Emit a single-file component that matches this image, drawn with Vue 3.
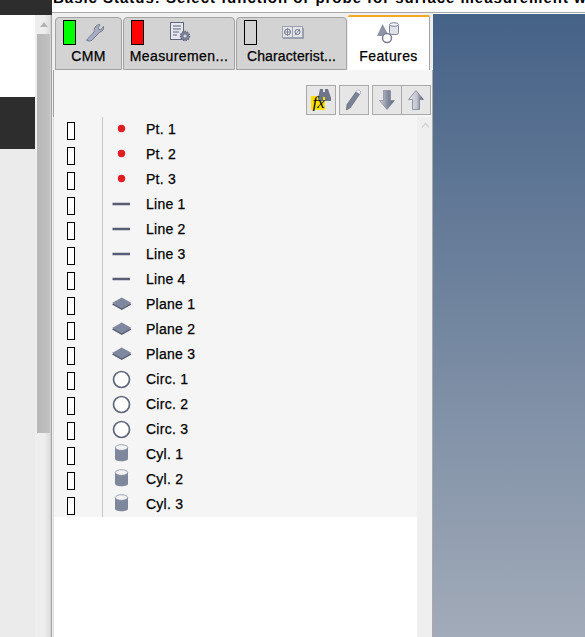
<script setup>
const groups = [
  { kind: 'pt', names: ['Pt. 1', 'Pt. 2', 'Pt. 3'] },
  { kind: 'line', names: ['Line 1', 'Line 2', 'Line 3', 'Line 4'] },
  { kind: 'plane', names: ['Plane 1', 'Plane 2', 'Plane 3'] },
  { kind: 'circ', names: ['Circ. 1', 'Circ. 2', 'Circ. 3'] },
  { kind: 'cyl', names: ['Cyl. 1', 'Cyl. 2', 'Cyl. 3'] },
]
const rows = groups.flatMap(g => g.names.map(name => ({ name, kind: g.kind })))
</script>

<template>
  <div class="page">
    <aside class="side">
      <div class="top-dark"></div>
      <div class="side-body">
        <div class="side-main">
          <div class="white"></div>
          <div class="dark"></div>
          <div class="grey"></div>
        </div>
        <div class="sbar">
          <div class="sbar-btn">
            <svg width="8" height="5" viewBox="0 0 8 5"><path d="M0 5 4 0 8 5Z" fill="#b4b4b4"/></svg>
          </div>
          <div class="sbar-thumb"></div>
        </div>
      </div>
    </aside>

    <main class="center">
      <div class="title-strip"><div class="title">Basic Status: Select function or probe for surface measurement with</div></div>

      <div class="tabs">
        <div class="tab t1">
          <div class="tab-top">
            <span class="lamp green"></span>
            <svg class="ticon" width="20" height="20" viewBox="0 0 20 20">
              <path d="M18.500 3.500c.6 3-1.200 5.500-4 5.700L7 17.200c-1.500 1.300-3.800.4-5.300.4-.3 0-.3-.4 0-.6l7.600-8.200C8.600 5.500 10.800 1.700 14.700 1.500l.5.400-2 2.400.4 2.200 2.100.5 2.300-3.100Z" fill="#a9afc2" stroke="#737a90" stroke-width="1"/>
            </svg>
          </div>
          <div class="tab-label">CMM</div>
        </div>
        <div class="tab t2">
          <div class="tab-top">
            <span class="lamp red"></span>
            <svg class="ticon i2" width="21" height="20" viewBox="0 0 21 20">
              <rect x="0.500" y="0.500" width="13" height="17" fill="#e6e8ee" stroke="#5f6880"/>
              <path d="M3 4h8M3 7h8M3 10h6M3 13h4" stroke="#596278" stroke-width="1.200"/>
              <circle cx="15" cy="14" r="4.500" fill="#7b8296" stroke="#666d82" stroke-width="1.500" stroke-dasharray="1.500 1"/>
              <circle cx="15" cy="14" r="1.500" fill="#d5d7dd"/>
            </svg>
          </div>
          <div class="tab-label">Measuremen...</div>
        </div>
        <div class="tab t3">
          <div class="tab-top">
            <span class="lamp empty"></span>
            <svg class="ticon i3" width="22" height="13" viewBox="0 0 22 13">
              <rect x="1" y="2" width="21" height="11" fill="#9a9fae"/>
              <rect x="0.500" y="0.500" width="20" height="11" fill="#e3e5ea" stroke="#9ca1af"/>
              <path d="M10.500 .5v11" stroke="#9ca1af"/>
              <circle cx="5.500" cy="6" r="3" fill="none" stroke="#6f7689"/>
              <path d="M2 6h7M5.500 2.500v7" stroke="#6f7689" stroke-width=".8"/>
              <circle cx="15.500" cy="6" r="2.500" fill="none" stroke="#6f7689"/>
              <path d="M13 9 18 3" stroke="#6f7689" stroke-width=".8"/>
            </svg>
          </div>
          <div class="tab-label narrow">Characterist...</div>
        </div>
        <div class="tab t4">
          <svg class="ficon" width="24" height="24" viewBox="0 0 24 24">
            <path d="M5.500 3 12 15H0Z" fill="#8e94a8"/>
            <rect x="12.500" y="2.500" width="9" height="11" rx="2" fill="#dfe1e7" stroke="#7d849a"/>
            <ellipse cx="17" cy="3.500" rx="4.500" ry="1.800" fill="#f4f5f7" stroke="#7d849a"/>
            <circle cx="10" cy="17" r="4.500" fill="#fff" stroke="#777e94" stroke-width="1.500"/>
          </svg>
          <div class="tab-label f">Features</div>
        </div>
      </div>

      <div class="panel">
        <div class="toolbar">
          <button class="tbtn">
            <svg width="22" height="22" viewBox="0 0 22 22">
              <rect x="1" y="7" width="14" height="14" fill="#fde000"/>
              <path d="M10 0h3v3h2V0h3l3 9v3h-6V8h-2v4H8V9Z" fill="#6f7589"/>
              <text x="2.500" y="19" class="fx">fx</text>
            </svg>
          </button>
          <button class="tbtn">
            <svg width="22" height="24" viewBox="0 0 22 24">
              <path d="M3.500 22 4 16.500 14 2.500c1.200-1.200 4 .5 3.500 2.200L7.500 19.500Z" fill="#7b8296" stroke="#6a7084" stroke-width=".8"/>
              <path d="M14 2.500c1.200-1.200 4 .5 3.500 2.200l-1 1.300-3.500-2.200Z" fill="#eceef2"/>
            </svg>
          </button>
          <div class="pair">
            <button class="tbtn half">
              <svg width="16" height="20" viewBox="0 0 16 20"><defs><linearGradient id="dn" x1="0" x2="1" y1="0" y2="0"><stop offset="0" stop-color="#cfd2d9"/><stop offset=".5" stop-color="#8b91a3"/><stop offset="1" stop-color="#5b6378"/></linearGradient></defs><path d="M4.500 .5h7v10h4L8 19.500.5 10.500h4Z" fill="url(#dn)" stroke="#787e92" stroke-width=".6"/></svg>
            </button>
            <button class="tbtn half h2">
              <svg width="16" height="20" viewBox="0 0 16 20"><defs><linearGradient id="up" x1="0" x2="1" y1="0" y2="0"><stop offset="0" stop-color="#e5e7eb"/><stop offset=".55" stop-color="#c2c6cf"/><stop offset="1" stop-color="#4f576c"/></linearGradient></defs><path d="M4.500 19.500h7v-10h4L8 .5.500 9.500h4Z" fill="url(#up)" stroke="#5f667a" stroke-width=".6"/></svg>
            </button>
          </div>
        </div>

        <div class="list-wrap">
          <div class="list">
            <div v-for="r in rows" :key="r.name" class="row">
              <div class="cell-check"><span class="check"></span></div>
              <div class="cell-icon">
                <svg width="22" height="20" viewBox="0 0 22 20">
                  <circle v-if="r.kind === 'pt'" cx="10.500" cy="9.500" r="3.700" fill="#e21c22"/>
                  <path v-else-if="r.kind === 'line'" d="M1.500 10h17.500" stroke="#565d75" stroke-width="2.500"/>
                  <template v-else-if="r.kind === 'plane'">
                    <path d="M10.800 5 20.500 10.500 10.800 16 1 10.500Z" fill="#565d72"/>
                    <path d="M10.800 3.500 20.500 9 10.800 14.500 1 9Z" fill="#8088a0"/>
                  </template>
                  <circle v-else-if="r.kind === 'circ'" cx="10.500" cy="10.500" r="8" fill="#fff" stroke="#5f667d" stroke-width="1.700"/>
                  <template v-else>
                    <path d="M4 3.500V14.500c0 1.700 2.500 2.800 6.500 2.800s6.500-1.100 6.500-2.800V3.500Z" fill="#7f879d"/>
                    <ellipse cx="10.500" cy="3.500" rx="6.200" ry="2.800" fill="#f2f3f5" stroke="#8b91a5" stroke-width=".8"/>
                  </template>
                </svg>
              </div>
              <div class="cell-name">{{ r.name }}</div>
            </div>
          </div>
          <svg class="list-up" width="9" height="6" viewBox="0 0 9 6"><path d="M1 5.500 4.500 1.500 8 5.500" fill="none" stroke="#d4d4d4" stroke-width="1.600"/></svg>
          <div class="list-blank"></div>
        </div>
      </div>
    </main>

    <section class="backdrop"></section>
  </div>
</template>

<style>
html, body { margin: 0; padding: 0; background: #fff; }
</style>

<style scoped>
.page {
  width: 585px; height: 637px; display: flex; overflow: hidden;
  font-family: "Liberation Sans", Arial, sans-serif; color: #000;
}
.side { width: 52px; flex: none; display: flex; flex-direction: column; }
.top-dark { height: 15px; background: #2d2d2d; flex: none; }
.side-body { flex: 1; display: flex; min-height: 0; }
.side-main { width: 35px; display: flex; flex-direction: column; }
.white { height: 82px; background: #fff; }
.dark { height: 52px; background: #2d2d2d; }
.grey { flex: 1; background: #ebebeb; }
.sbar { width: 17px; background: linear-gradient(90deg, #eeeeee 0, #eeeeee 55%, #dcdcdc 90%, #8c8c8c 100%); display: flex; flex-direction: column; }
.sbar-btn { height: 19px; display: flex; justify-content: center; align-items: center; box-sizing: border-box; }
.sbar-thumb { height: 399px; width: 13px; margin-left: 2px; background: linear-gradient(90deg, #b7b7b7, #c2c2c2); }

.center { width: 381px; flex: none; display: flex; flex-direction: column; background: #efefef; }
.title-strip { height: 12px; background: #fff; border-bottom: 1px solid #a8a8a8; overflow: hidden; flex: none; width: 533px; position: relative; z-index: 2; }
.title { font-weight: bold; font-size: 15px; line-height: 15px; margin-top: -10px; padding-left: 1px; letter-spacing: 0.98px; white-space: nowrap; }

.tabs { display: flex; align-items: flex-end; gap: 1px; height: 57px; padding-left: 3px; flex: none; }
.tab { height: 53px; box-sizing: border-box; background: #d3d3d3; border: 1px solid #a3a3a3; border-radius: 4px 4px 0 0; display: flex; flex-direction: column; }
.t1 { width: 67px; }
.t2 { width: 112px; }
.t3 { width: 111px; }
.t4 { width: 82px; height: 55px; background: #fff; border: none; border-top: 2px solid #f5a623; border-right: 1px solid #a3a3a3; border-radius: 2px 2px 0 0; align-items: center; }
.tab-top { display: flex; height: 27px; padding: 2px 0 0 7px; box-sizing: border-box; align-items: flex-start; }
.lamp { width: 13px; height: 25px; box-sizing: border-box; border: 1px solid #000; flex: none; }
.green { background: #00ff00; }
.red { background: #ff0000; }
.empty { background: #d3d3d3; }
.ticon { margin: 3px 0 0 9px; }
.i2 { margin: 2px 0 0 26px; }
.i3 { margin: 6px 0 0 25px; }
.tab-label { margin-top: 3px; text-align: center; font-size: 14px; line-height: 16px; letter-spacing: 0.4px; white-space: nowrap; -webkit-text-stroke: 0.25px #000; }
.tab-label.narrow { letter-spacing: 0.13px; }
.ficon { margin-top: 4px; }
.tab-label.f { margin-top: 3px; }

.panel { flex: 1; display: flex; flex-direction: column; margin-left: 1px; min-height: 0; border-right: 1px solid #a9a9a9; }
.toolbar { height: 47px; flex: none; box-sizing: border-box; background: #f5f5f5; border-left: 1px solid #a3a3a3; display: flex; justify-content: flex-end; align-items: flex-start; gap: 3px; padding: 15px 1px 0 0; }
.tbtn { width: 30px; height: 30px; padding: 0; box-sizing: border-box; background: #e6e6e6; border: 1px solid #a9a9a9; display: flex; align-items: center; justify-content: center; }
.pair { display: flex; }
.half { width: 30px; }
.h2 { width: 29px; border-left: none; }
.list-wrap { flex: 1; display: flex; flex-direction: column; position: relative; min-height: 0; width: 364px; border-left: 1px solid #dddddd; background: #fff; box-sizing: border-box; }
.list { background: #f5f5f5; }
.row { height: 25px; display: flex; align-items: center; }
.cell-check { width: 49px; height: 25px; box-sizing: border-box; border-right: 1px solid #c8c8c8; display: flex; align-items: center; padding: 2px 0 0 13px; flex: none; }
.check { width: 6px; height: 16px; background: #fff; border: 1.5px solid #000; box-sizing: content-box; }
.cell-icon { width: 37px; flex: none; display: flex; justify-content: center; margin-bottom: 2px; }
.cell-name { margin: 0 0 2px 6px; font-size: 14px; letter-spacing: 0.25px; -webkit-text-stroke: 0.25px #000; white-space: nowrap; }
.list-up { position: absolute; left: 367px; top: 5px; }
.list-blank { flex: 1; }
.fx { font: italic 17px "Liberation Serif", serif; fill: #000; }

.backdrop { flex: 1; margin-top: 14px; background: linear-gradient(180deg, #456287 0%, #a2abb9 100%); }
</style>
